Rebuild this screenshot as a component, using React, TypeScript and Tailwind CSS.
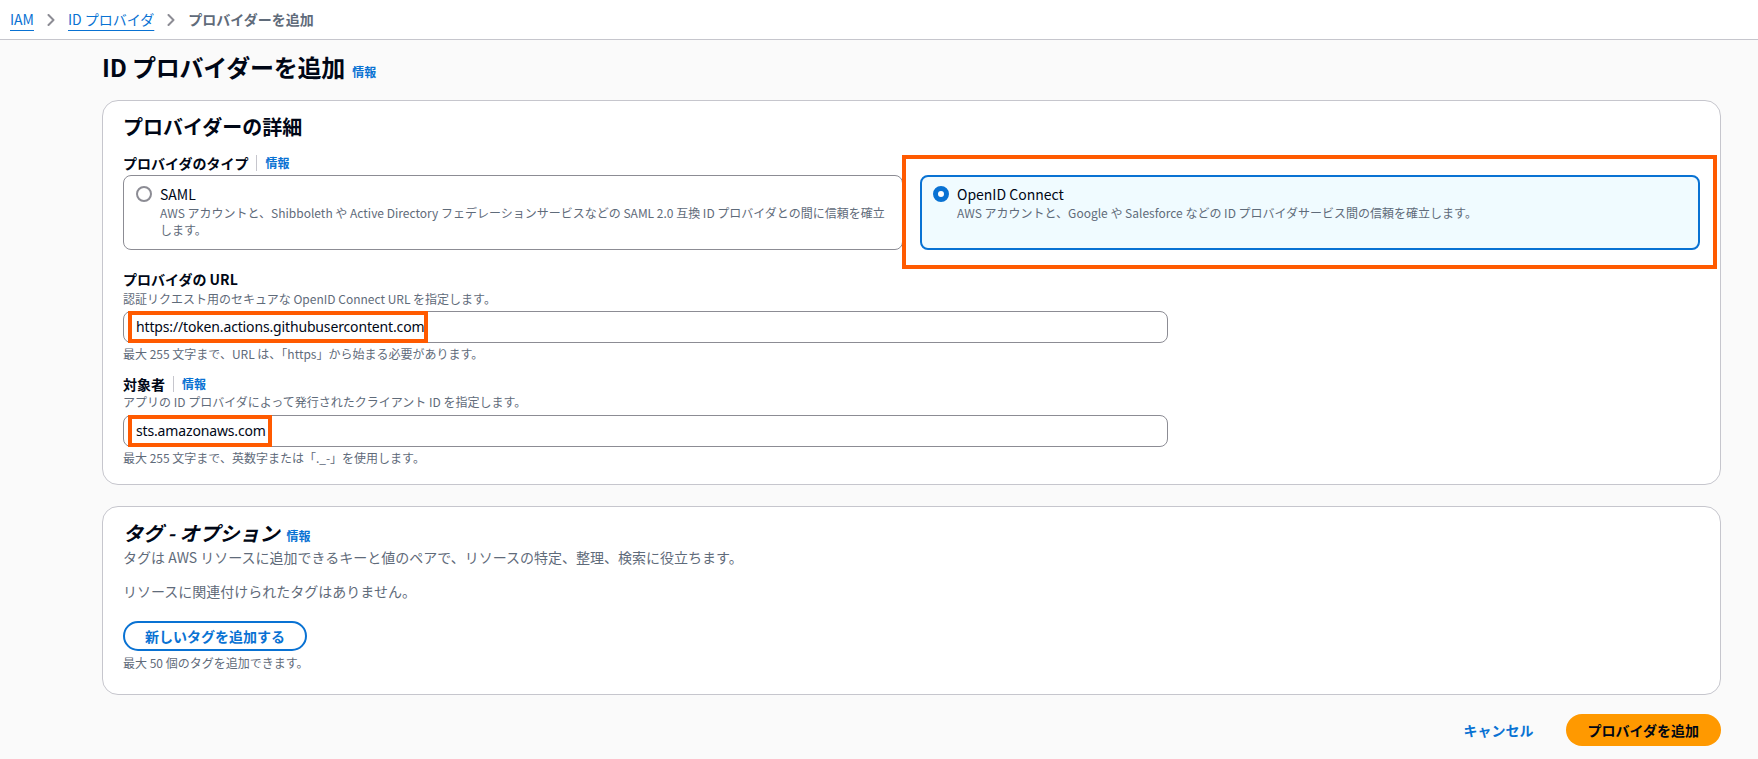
import React from "react"

const FONT = "font-['Noto_Sans_CJK_JP','Noto_Sans',sans-serif]"

function Chevron() {
  return (
    <svg width="8" height="12" viewBox="0 0 8 12" className="mx-[13px] shrink-0">
      <polyline points="1.5,1 6.5,6 1.5,11" fill="none" stroke="#8c8c94" strokeWidth="2" strokeLinejoin="round" strokeLinecap="round" />
    </svg>
  )
}

function InfoLink({ className = "" }: { className?: string }) {
  return <a className={"text-[12px] font-bold leading-[16px] text-[#0972d3] " + className}>情報</a>
}

function Radio({ checked }: { checked?: boolean }) {
  if (checked) {
    return <span className="mt-[2px] box-border h-[16px] w-[16px] shrink-0 rounded-full border-[5px] border-[#0972d3] bg-white" />
  }
  return <span className="mt-[2px] box-border h-[16px] w-[16px] shrink-0 rounded-full border-2 border-[#8c8c94] bg-white" />
}

// orange annotation frame drawn over the text value
function Annotated({ children, left = 8, right = 4 }: { children: React.ReactNode; left?: number; right?: number }) {
  return (
    <span className="relative inline-block leading-[20px]">
      {children}
      <span
        className="pointer-events-none absolute -top-[6px] -bottom-[6px] border-4 border-[#ff5a00]"
        style={{ left: -left, right: -right }}
      />
    </span>
  )
}

function FakeInput({ children }: { children: React.ReactNode }) {
  return (
    <div className="flex h-[32px] w-[1045px] items-center rounded-[8px] border border-[#8c8c94] bg-white pl-[12px] font-['Noto_Sans','Noto_Sans_CJK_JP',sans-serif] text-[14px] tracking-[-0.15px] text-[#000716]">
      {children}
    </div>
  )
}

export default function App() {
  return (
    <div className={"min-h-screen bg-[#fafafa] text-[#000716] " + FONT}>
      {/* breadcrumbs */}
      <div className="flex h-[40px] items-center border-b border-[#c6c6cd] bg-white pl-[10px] text-[14px]">
        <a className="text-[#0972d3] underline underline-offset-[5px]">IAM</a>
        <Chevron />
        <a className="text-[#0972d3] underline underline-offset-[5px]">ID プロバイダ</a>
        <Chevron />
        <span className="font-bold text-[#5f6b7a]">プロバイダーを追加</span>
      </div>

      <div className="pl-[102px] pr-[37px]">
        <div className="flex items-baseline gap-[7px] pt-[12px]">
          <h1 className="text-[24px] font-bold leading-[30px] tracking-[-0.2px]">ID プロバイダーを追加</h1>
          <InfoLink />
        </div>

        {/* provider details */}
        <section className="mt-[18px] rounded-[16px] border border-[#c6c6cd] bg-white px-[20px] pt-[14px] pb-[18px]">
          <h2 className="text-[20px] font-bold leading-[24px]">プロバイダーの詳細</h2>

          <div className="mt-[14px] flex items-center text-[14px] leading-[20px]">
            <span className="font-bold">プロバイダのタイプ</span>
            <span className="mx-[8px] h-[16px] w-px bg-[#c6c6cd]" />
            <InfoLink />
          </div>

          <div className="mt-[2px] grid grid-cols-2 gap-[17px]">
            <div className="flex gap-2 rounded-[8px] border border-[#8c8c94] bg-white px-[12px] pt-[8px] pb-[11px]">
              <Radio />
              <div>
                <div className="text-[14px] leading-[20px]">SAML</div>
                <div className="text-[12px] leading-[17px] text-[#5f6b7a]">
                  AWS アカウントと、Shibboleth や Active Directory フェデレーションサービスなどの SAML 2.0 互換 ID プロバイダとの間に信頼を確立します。
                </div>
              </div>
            </div>
            <div className="relative">
              <div className="flex h-full gap-2 rounded-[8px] border-2 border-[#0972d3] bg-[#f0fbff] px-[11px] pt-[7px] pb-[10px]">
                <Radio checked />
                <div>
                  <div className="text-[14px] leading-[20px]">OpenID Connect</div>
                  <div className="text-[12px] leading-[17px] text-[#5f6b7a]">
                    AWS アカウントと、Google や Salesforce などの ID プロバイダサービス間の信頼を確立します。
                  </div>
                </div>
              </div>
              <span className="pointer-events-none absolute -top-[20px] -bottom-[19px] -left-[18px] -right-[17px] border-4 border-[#ff5a00]" />
            </div>
          </div>

          <div className="mt-[19px] text-[14px] font-bold leading-[20px]">プロバイダの URL</div>
          <div className="mt-[2px] text-[12px] leading-[16px] text-[#5f6b7a]">
            認証リクエスト用のセキュアな OpenID Connect URL を指定します。
          </div>
          <div className="mt-[4px]">
            <FakeInput>
              <Annotated>https://token.actions.githubusercontent.com</Annotated>
            </FakeInput>
          </div>
          <div className="mt-[3px] text-[12px] leading-[16px] text-[#5f6b7a]">
            最大 255 文字まで、URL は、「https」から始まる必要があります。
          </div>

          <div className="mt-[12px] flex items-center text-[14px] leading-[20px]">
            <span className="font-bold">対象者</span>
            <span className="mx-[8px] h-[16px] w-px bg-[#c6c6cd]" />
            <InfoLink />
          </div>
          <div className="text-[12px] leading-[16px] text-[#5f6b7a]">
            アプリの ID プロバイダによって発行されたクライアント ID を指定します。
          </div>
          <div className="mt-[5px]">
            <FakeInput>
              <Annotated right={6}>sts.amazonaws.com</Annotated>
            </FakeInput>
          </div>
          <div className="mt-[3px] text-[12px] leading-[16px] text-[#5f6b7a]">
            最大 255 文字まで、英数字または「._-」を使用します。
          </div>
        </section>

        {/* tags */}
        <section className="mt-[21px] rounded-[16px] border border-[#c6c6cd] bg-white px-[20px] pt-[14px] pb-[23px]">
          <div className="flex items-baseline gap-[7px]">
            <h2 className="text-[20px] font-bold italic leading-[24px]">タグ - オプション</h2>
            <InfoLink />
          </div>
          <p className="mt-[2px] text-[14px] leading-[20px] text-[#5f6b7a]">
            タグは AWS リソースに追加できるキーと値のペアで、リソースの特定、整理、検索に役立ちます。
          </p>
          <p className="mt-[14px] text-[14px] leading-[20px] text-[#5f6b7a]">
            リソースに関連付けられたタグはありません。
          </p>
          <button className="mt-[20px] flex h-[30px] items-center rounded-full border-2 border-[#0972d3] bg-white px-[20px] text-[14px] font-bold text-[#0972d3]">
            新しいタグを追加する
          </button>
          <div className="mt-[4px] text-[12px] leading-[16px] text-[#5f6b7a]">
            最大 50 個のタグを追加できます。
          </div>
        </section>

        {/* actions */}
        <div className="mt-[19px] flex items-center justify-end gap-[12px]">
          <button className="h-[32px] px-[20px] text-[14px] font-bold text-[#0972d3]">キャンセル</button>
          <button className="h-[32px] rounded-full bg-[#ff9900] px-[22px] text-[14px] font-bold text-[#000716]">
            プロバイダを追加
          </button>
        </div>
      </div>
    </div>
  )
}
